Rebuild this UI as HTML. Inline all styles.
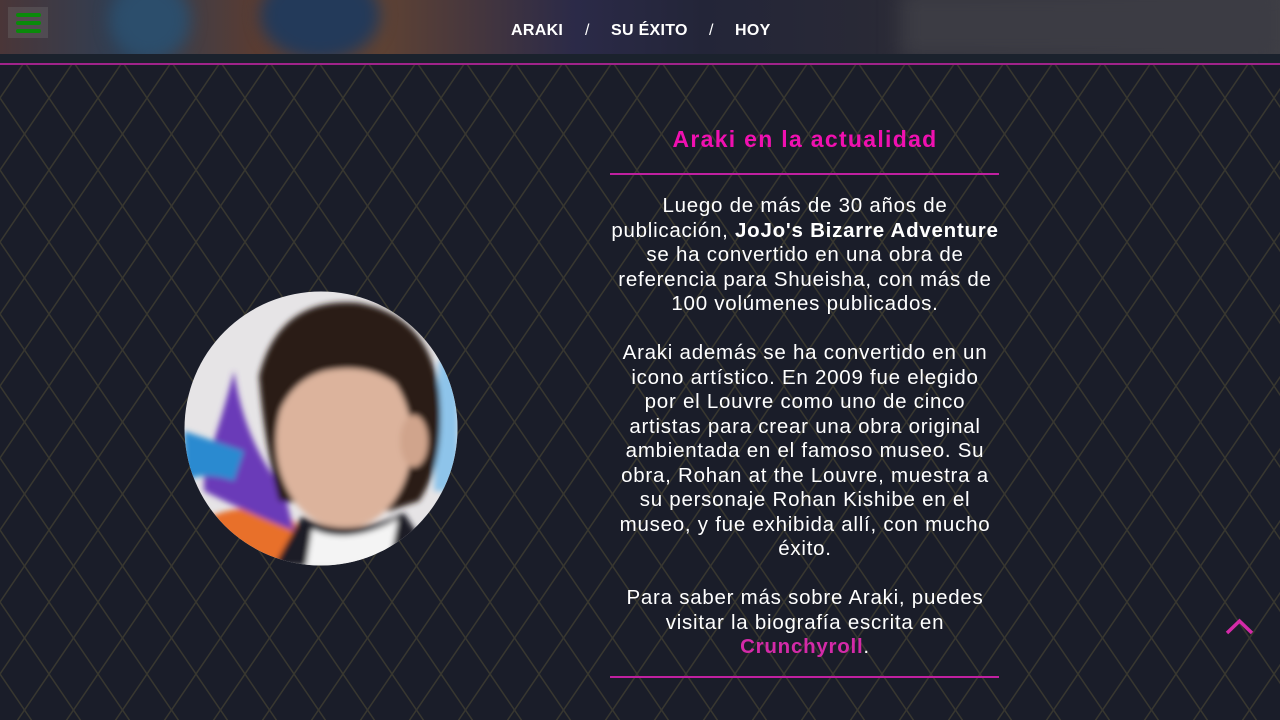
<!DOCTYPE html>
<html><head><meta charset="utf-8"><style>
html,body{margin:0;padding:0;width:1280px;height:720px;overflow:hidden;background:#1a1d29;font-family:"Liberation Sans",sans-serif}
.bg{position:absolute;left:0;top:64px;width:1280px;height:656px;background-color:#1a1d29;
background-image:url("data:image/svg+xml,%3Csvg xmlns='http://www.w3.org/2000/svg' width='49' height='72'%3E%3Cpath d='M24.5 0L49 36L24.5 72L0 36Z' fill='none' stroke='%2338372f' stroke-width='1.5'/%3E%3C/svg%3E");
background-position:0 -2px}
.hdr{position:absolute;left:0;top:0;width:1280px;height:54px;overflow:hidden;
background:linear-gradient(90deg,#4a3638 0%,#2e3f55 10%,#5a3c32 20%,#5e4234 30%,#2b2a48 45%,#232538 55%,#2a2a36 70%,#36363e 85%,#404046 100%)}
.band{position:absolute;left:0;top:54px;width:1280px;height:10px;background:#1b222d}
.pl{position:absolute;left:0;top:63px;width:1280px;height:2px;background:#a0238a}
.nav{position:absolute;top:22px;color:#fff;font-weight:bold;font-size:16px;letter-spacing:.3px}
.menu{position:absolute;left:8px;top:7px;width:40px;height:31px;background:rgba(120,120,120,.3)}
.menu i{position:absolute;left:8px;width:25px;height:4px;border-radius:2px;background:#0a8a0a}
.t{position:absolute;left:560px;width:490px;text-align:center;color:#fff;font-size:20.5px;line-height:24.5px;letter-spacing:.75px}
.h{position:absolute;left:560px;width:490px;top:126px;text-align:center;color:#f010b0;font-weight:bold;font-size:23px;letter-spacing:1.3px}
.ln{position:absolute;left:610px;width:389px;height:2px;background:#c020a0}
</style></head><body>
<div class="hdr">
<div style="position:absolute;left:110px;top:-20px;width:80px;height:80px;border-radius:50%;background:#2c4e6c;filter:blur(8px)"></div>
<div style="position:absolute;left:260px;top:-30px;width:120px;height:90px;border-radius:50%;background:#233a5a;filter:blur(8px)"></div>
<div style="position:absolute;left:900px;top:-10px;width:380px;height:70px;background:#3c3c44;filter:blur(10px)"></div>
</div>
<div class="menu"><i style="top:6px"></i><i style="top:14px"></i><i style="top:22px"></i></div>
<div class="nav" style="left:511px">ARAKI</div>
<div class="nav" style="left:585px;font-weight:normal">/</div>
<div class="nav" style="left:611px">SU ÉXITO</div>
<div class="nav" style="left:709px;font-weight:normal">/</div>
<div class="nav" style="left:735px">HOY</div>
<div class="band"></div>
<div class="bg"></div>
<div class="pl"></div>

<svg style="position:absolute;left:184px;top:291px" width="274" height="275" viewBox="0 0 274 275">
<defs><clipPath id="c"><ellipse cx="137" cy="137.5" rx="136.5" ry="137"/></clipPath>
<filter id="b"><feGaussianBlur stdDeviation="3"/></filter></defs>
<g clip-path="url(#c)">
<rect width="274" height="275" fill="#e6e4e6"/>
<g filter="url(#b)">
<path d="M0 240 Q60 200 110 230 L130 275 L0 275Z" fill="#e8702a"/>
<path d="M20 180 Q40 120 50 80 Q60 150 100 200 L110 240 Q60 220 20 200Z" fill="#6a3ab8"/>
<path d="M0 140 Q30 150 60 160 L50 190 Q20 180 0 190Z" fill="#2a8ad0"/>
<path d="M255 70 L274 60 L274 200 L250 200Z" fill="#8ec4ea"/>
<path d="M75 85 Q95 5 175 12 Q245 25 255 100 Q262 170 235 210 L205 220 L95 210 Q80 150 75 85Z" fill="#2c1e18"/>
<ellipse cx="160" cy="150" rx="68" ry="88" fill="#dcb39c"/>
<path d="M85 100 Q105 40 175 48 Q230 60 240 120 L220 100 Q190 70 140 80 Q105 90 92 130Z" fill="#2c1e18"/>
<ellipse cx="230" cy="150" rx="14" ry="26" fill="#d0a48c"/>
<path d="M90 275 L118 225 Q160 250 220 222 L255 275Z" fill="#1e1e28"/>
<path d="M122 275 L128 238 Q165 255 214 228 L205 275Z" fill="#f4f4f4"/>
</g></g></svg>

<div class="h">Araki en la actualidad</div>
<div class="ln" style="top:173px"></div>
<div class="t" style="top:194px">Luego de más de 30 años de<br>publicación, <b>JoJo's Bizarre Adventure</b><br>se ha convertido en una obra de<br>referencia para Shueisha, con más de<br>100 volúmenes publicados.<br><br>Araki además se ha convertido en un<br>icono artístico. En 2009 fue elegido<br>por el Louvre como uno de cinco<br>artistas para crear una obra original<br>ambientada en el famoso museo. Su<br>obra, Rohan at the Louvre, muestra a<br>su personaje Rohan Kishibe en el<br>museo, y fue exhibida allí, con mucho<br>éxito.<br><br>Para saber más sobre Araki, puedes<br>visitar la biografía escrita en<br><b style="color:#d42aa8">Crunchyroll</b>.</div>
<div class="ln" style="top:676px"></div>
<svg style="position:absolute;left:1224px;top:616px" width="32" height="20"><path d="M3 17L15.5 5L28 17" fill="none" stroke="#d42aa8" stroke-width="3.5"/></svg>
</body></html>
